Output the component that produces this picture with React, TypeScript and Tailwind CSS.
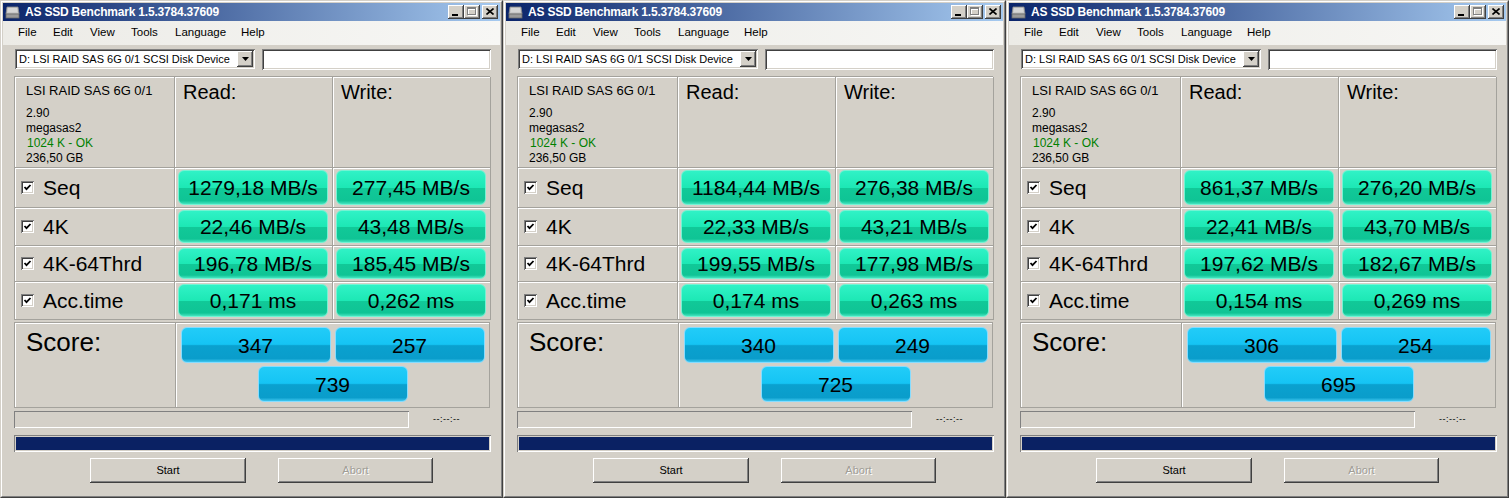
import React from "react";

type Data = {
  seq: [string, string];
  k4: [string, string];
  k64: [string, string];
  acc: [string, string];
  score: [string, string, string];
};

const windows: Data[] = [
  {
    seq: ["1279,18 MB/s", "277,45 MB/s"],
    k4: ["22,46 MB/s", "43,48 MB/s"],
    k64: ["196,78 MB/s", "185,45 MB/s"],
    acc: ["0,171 ms", "0,262 ms"],
    score: ["347", "257", "739"],
  },
  {
    seq: ["1184,44 MB/s", "276,38 MB/s"],
    k4: ["22,33 MB/s", "43,21 MB/s"],
    k64: ["199,55 MB/s", "177,98 MB/s"],
    acc: ["0,174 ms", "0,263 ms"],
    score: ["340", "249", "725"],
  },
  {
    seq: ["861,37 MB/s", "276,20 MB/s"],
    k4: ["22,41 MB/s", "43,70 MB/s"],
    k64: ["197,62 MB/s", "182,67 MB/s"],
    acc: ["0,154 ms", "0,269 ms"],
    score: ["306", "254", "695"],
  },
];

const raised =
  "shadow-[inset_-1px_-1px_0_#404040,inset_1px_1px_0_#ffffff,inset_-2px_-2px_0_#808080]";
const sunken =
  "shadow-[inset_1px_1px_0_#808080,inset_-1px_-1px_0_#ffffff,inset_2px_2px_0_#404040,inset_-2px_-2px_0_#d4d0c8]";
const thinSunken = "shadow-[inset_1px_1px_0_#808080,inset_-1px_-1px_0_#ffffff]";

const cell =
  "border-r border-b border-r-[#a4a29c] border-b-[#a4a29c] shadow-[inset_1px_1px_0_#ffffff]";

function GreenBox({ v }: { v: string }) {
  return (
    <div className="flex-1 h-full rounded-[6px] border border-[#74f3d3] bg-[linear-gradient(to_bottom,#30f2c6_0%,#1de8b5_50%,#11c998_52%,#0fc495_90%,#44e4bf_100%)] flex items-center justify-center text-[21px] text-black leading-none">
      {v}
    </div>
  );
}

function BlueBox({ v }: { v: string }) {
  return (
    <div className="w-[150px] h-[36px] rounded-[6px] border border-[#86dcff] bg-[linear-gradient(to_bottom,#22ccf8_0%,#15c4f4_48%,#0aa1cf_52%,#0a9dcb_90%,#3ec6ef_100%)] flex items-center justify-center text-[21px] text-black leading-none">
      {v}
    </div>
  );
}

function Check() {
  return (
    <div className={`w-[13px] h-[13px] bg-white ${sunken} flex items-center justify-center`}>
      <svg width="9" height="9" viewBox="0 0 9 9">
        <polyline points="1.5,4 3.5,6.2 7.5,2" fill="none" stroke="#000" strokeWidth="1.8" />
      </svg>
    </div>
  );
}

function Row({ label, vals, h }: { label: string; vals: [string, string]; h: string }) {
  return (
    <>
      <div className={`${cell} ${h} flex items-center pl-[6px]`}>
        <Check />
        <span className="ml-[9px] text-[21px] leading-none text-black">{label}</span>
      </div>
      <div className={`${cell} ${h} flex items-center pl-[3px] pr-[4px] py-[2px]`}>
        <GreenBox v={vals[0]} />
      </div>
      <div className={`${cell} ${h} flex items-center pl-[3px] pr-[4px] py-[2px]`}>
        <GreenBox v={vals[1]} />
      </div>
    </>
  );
}

function TitleBtn({ kind }: { kind: "min" | "max" | "close" }) {
  return (
    <div className={`w-[16px] h-[14px] bg-[#d4d0c8] ${raised} relative`}>
      {kind === "min" && <div className="absolute left-[4px] top-[9px] w-[6px] h-[2px] bg-black" />}
      {kind === "max" && (
        <>
          <div className="absolute left-[4px] top-[3px] w-[9px] h-[8px] border border-[#ffffff] border-t-2" />
          <div className="absolute left-[3px] top-[2px] w-[9px] h-[8px] border border-[#808080] border-t-2" />
        </>
      )}
      {kind === "close" && (
        <svg className="absolute left-[4px] top-[3px]" width="8" height="7" viewBox="0 0 8 7">
          <path d="M0.5 0.5 L7.5 6.5 M7.5 0.5 L0.5 6.5" stroke="#000" strokeWidth="1.6" />
        </svg>
      )}
    </div>
  );
}

function Window({ d }: { d: Data }) {
  return (
    <div className="w-[503px] h-[498px] shrink-0 border border-t-[#d4d0c8] border-l-[#d4d0c8] border-r-[#404040] border-b-[#404040]">
      <div className="h-full border border-t-white border-l-white border-r-[#808080] border-b-[#808080] bg-[#d4d0c8] p-[1px] flex flex-col">
        {/* title bar */}
        <div className="h-[18px] flex items-center bg-[linear-gradient(to_right,#0a246a,#a6caf0)] pl-[2px] pr-[2px]">
          <svg width="15" height="13" viewBox="0 0 15 13">
            <path d="M2 1 L13 1 L14 8 L1 8 Z" fill="#c8c8c8" stroke="#8a8a8a" strokeWidth="0.8" />
            <rect x="1" y="8" width="13" height="4" fill="#9a9a9a" stroke="#6a6a6a" strokeWidth="0.8" />
            <path d="M3 3 L12 3 M3 5 L12 5" stroke="#e8e8e8" strokeWidth="0.8" />
          </svg>
          <span className="ml-[5px] text-white font-bold text-[12px] leading-none tracking-[-0.2px]">
            AS SSD Benchmark 1.5.3784.37609
          </span>
          <div className="ml-auto flex items-center">
            <TitleBtn kind="min" />
            <TitleBtn kind="max" />
            <div className="w-[2px]" />
            <TitleBtn kind="close" />
          </div>
        </div>
        {/* menu */}
        <div className="h-[24px] flex items-center pl-[15px] bg-[linear-gradient(to_right,#ecebe6,#f7f7f5)] text-[11.5px] text-black leading-none">
          <span className="w-[35px]">File</span>
          <span className="w-[37px]">Edit</span>
          <span className="w-[41px]">View</span>
          <span className="w-[44px]">Tools</span>
          <span className="w-[66px]">Language</span>
          <span>Help</span>
        </div>
        {/* combo row */}
        <div className="mt-[4px] ml-[12px] flex gap-[7px] h-[20px]">
          <div className={`w-[240px] h-[20px] bg-white ${sunken} flex items-center pl-[4px] pr-[2px]`}>
            <span className="text-[11px] text-black leading-none flex-1 whitespace-nowrap">
              D: LSI RAID SAS 6G 0/1 SCSI Disk Device
            </span>
            <div className={`w-[16px] h-[16px] bg-[#d4d0c8] ${raised} flex items-center justify-center`}>
              <svg width="7" height="4" viewBox="0 0 7 4">
                <path d="M0 0 L7 0 L3.5 4 Z" fill="#000" />
              </svg>
            </div>
          </div>
          <div className={`w-[229px] h-[21px] bg-white ${sunken}`} />
        </div>
        {/* results grid */}
        <div className="mt-[7px] ml-[11px] w-[476px] grid grid-cols-[160px_158px_158px] border-t border-l border-[#a4a29c]">
          <div className={`${cell} h-[91px] pl-[11px] pt-[6px] text-black`}>
            <div className="text-[13px] leading-[15px]">LSI RAID SAS 6G 0/1</div>
            <div className="mt-[8px] text-[12px] leading-[15px]">2.90</div>
            <div className="text-[12px] leading-[15px]">megasas2</div>
            <div className="text-[12px] leading-[15px] text-[#008000] pl-[1px]">1024 K - OK</div>
            <div className="text-[12px] leading-[15px]">236,50 GB</div>
          </div>
          <div className={`${cell} h-[91px] pl-[8px] pt-[5px] text-[20px] leading-none text-black`}>
            Read:
          </div>
          <div className={`${cell} h-[91px] pl-[8px] pt-[5px] text-[20px] leading-none text-black`}>
            Write:
          </div>
          <Row label="Seq" vals={d.seq} h="h-[40px]" />
          <Row label="4K" vals={d.k4} h="h-[38px]" />
          <Row label="4K-64Thrd" vals={d.k64} h="h-[36px]" />
          <Row label="Acc.time" vals={d.acc} h="h-[38px]" />
        </div>
        {/* score */}
        <div className="mt-[2px] ml-[11px] w-[476px] h-[86px] flex border-t border-l border-[#a4a29c]">
          <div className={`${cell} w-[161px] h-full pl-[11px] pt-[6px] text-[26px] leading-none text-black`}>
            Score:
          </div>
          <div className={`${cell} flex-1 h-full pt-[4px] flex flex-col items-center`}>
            <div className="flex gap-[4px]">
              <BlueBox v={d.score[0]} />
              <BlueBox v={d.score[1]} />
            </div>
            <div className="mt-[3px]">
              <BlueBox v={d.score[2]} />
            </div>
          </div>
        </div>
        {/* progress */}
        <div className="mt-[3px] ml-[11px] flex items-center h-[17px]">
          <div className={`w-[395px] h-[17px] ${thinSunken}`} />
          <span className="ml-[24px] text-[9px] leading-none text-black tracking-[0.5px]">--:--:--</span>
        </div>
        <div className={`mt-[7px] ml-[11px] w-[477px] h-[17px] ${thinSunken} p-[2px]`}>
          <div className="w-full h-full bg-[#0a2163]" />
        </div>
        {/* buttons */}
        <div className="mt-[6px] ml-[87px] flex gap-[32px]">
          <div className={`w-[156px] h-[25px] bg-[#d4d0c8] ${raised} flex items-center justify-center text-[11px] text-black`}>
            Start
          </div>
          <div className={`w-[155px] h-[25px] bg-[#d4d0c8] ${raised} flex items-center justify-center text-[11px] text-[#a09d96] [text-shadow:1px_1px_0_#ffffff]`}>
            Abort
          </div>
        </div>
      </div>
    </div>
  );
}

export default function App() {
  return (
    <div className="w-[1509px] h-[498px] flex bg-[#d4d0c8] font-['Liberation_Sans',Arial,sans-serif] overflow-hidden">
      {windows.map((d, i) => (
        <Window key={i} d={d} />
      ))}
    </div>
  );
}
